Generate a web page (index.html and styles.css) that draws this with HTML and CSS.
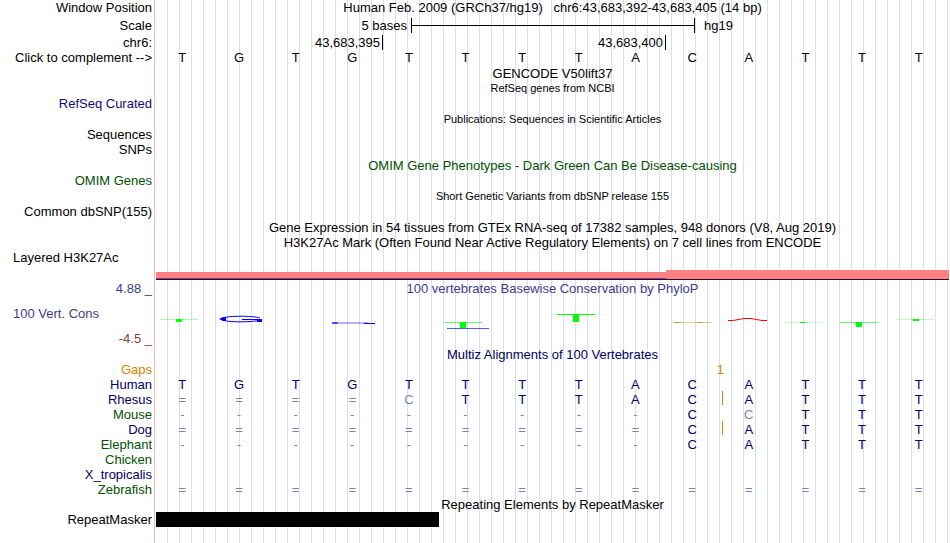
FILE: index.html
```html
<!DOCTYPE html>
<html lang="en">
<head>
  <meta charset="UTF-8" />
  <meta name="viewport" content="width=device-width, initial-scale=1" />
  <title>Human hg19 chr6:43,683,392-43,683,405</title>
  <link rel="stylesheet" href="styles.css">
</head>
<body>
  <main class="browser">
    <div class="row row-tall">
      <div class="label">Window Position</div>
      <div class="title">Human Feb. 2009 (GRCh37/hg19) &nbsp; chr6:43,683,392-43,683,405 (14 bp)</div>
    </div>
    <div class="row row-scale">
      <div class="label">Scale</div>
      <div class="scale">
        <span class="scale-size">5 bases</span>
        <span class="scale-bar"></span>
        <span class="scale-db">hg19</span>
      </div>
    </div>
    <div class="row row-tall row-ruler">
      <div class="label">chr6:</div>
      <div class="ruler">
        <span class="tick">43,683,395</span>
        <span class="tick">43,683,400</span>
      </div>
    </div>
    <div class="row">
      <button class="label complement" type="button">Click to complement --&gt;</button>
      <div class="bases">
        <span>T</span><span>G</span><span>T</span><span>G</span><span>T</span><span>T</span><span>T</span>
        <span>T</span><span>A</span><span>C</span><span>A</span><span>T</span><span>T</span><span>T</span>
      </div>
    </div>

    <!-- genes and variants -->
    <div class="row row-track"><div class="title">GENCODE V50lift37</div></div>
    <div class="row"><div class="title small">RefSeq genes from NCBI</div></div>
    <div class="row"><div class="label navy">RefSeq Curated</div></div>
    <div class="row row-track"><div class="title small">Publications: Sequences in Scientific Articles</div></div>
    <div class="row"><div class="label">Sequences</div></div>
    <div class="row"><div class="label">SNPs</div></div>
    <div class="row row-track"><div class="title green">OMIM Gene Phenotypes - Dark Green Can Be Disease-causing</div></div>
    <div class="row"><div class="label green">OMIM Genes</div></div>
    <div class="row row-track"><div class="title small">Short Genetic Variants from dbSNP release 155</div></div>
    <div class="row"><div class="label">Common dbSNP(155)</div></div>
    <div class="row row-track"><div class="title">Gene Expression in 54 tissues from GTEx RNA-seq of 17382 samples, 948 donors (V8, Aug 2019)</div></div>

    <!-- regulation -->
    <div class="row"><div class="title">H3K27Ac Mark (Often Found Near Active Regulatory Elements) on 7 cell lines from ENCODE</div></div>
    <div class="row row-h3k">
      <div class="label left">Layered H3K27Ac</div>
      <div class="signal">
        <span class="signal-low"></span>
        <span class="signal-high"></span>
      </div>
    </div>

    <!-- conservation -->
    <div class="row row-track">
      <div class="label blue">4.88 _</div>
      <div class="title blue">100 vertebrates Basewise Conservation by PhyloP</div>
    </div>
    <div class="row row-cons">
      <div class="cons-labels">
        <div class="label left blue">100 Vert. Cons</div>
        <div class="label red">-4.5 _</div>
      </div>
      <svg class="logo" viewBox="0 -1 793 51" preserveAspectRatio="none" aria-hidden="true">
        <g fill="#00ff00">
          <path d="M4 22h38v1H4z" opacity=".35"/>
          <path d="M20 22h6v3h-6z"/>
          <path d="M288 25h38v1h-38z" opacity=".65"/>
          <path d="M304 25h6v6h-6z"/>
          <path d="M401 17h38v1h-38z"/>
          <path d="M417 17h6v8h-6z"/>
          <path d="M628 25h38v1h-38z" opacity=".2"/>
          <path d="M644 25h6v1h-6z"/>
          <path d="M684 25h38v1h-38z" opacity=".6"/>
          <path d="M700 25h6v5h-6z"/>
          <path d="M741 22h38v1h-38z" opacity=".25"/>
          <path d="M757 22h6v2h-6z"/>
        </g>
        <g fill="#0000ff">
          <path d="M104 21C98 18.500 66 18.500 66 22S94 25.500 102 23.500" fill="none" stroke="#0000ff"/>
          <path d="M63 22l4-2h3v4h-3zM86 22h20v1H86zM101 22h5v3h-5z"/>
          <path d="M176 25h6v2h-6z" opacity=".7"/>
          <path d="M182 25h30v1h-30zM182 26h28v1h-28z" opacity=".3"/>
          <path d="M208 26h11v1h-11z"/>
          <path d="M291 31h42v1h-42z" opacity=".65"/>
        </g>
        <path d="M517 25h39v1h-39z" fill="#b4aa32" opacity=".5"/>
        <path d="M518 25h7v1h-7zM541 25h6v1h-6z" fill="#b4aa32"/>
        <path d="M572 23.500h5l11-2h7l11 2h5" fill="none" stroke="#ff0000"/>
      </svg>
    </div>
    <div class="row"><div class="title dark">Multiz Alignments of 100 Vertebrates</div></div>

    <table class="align">
      <tbody>
        <tr class="gaps"><th scope="row">Gaps</th><td colspan="9"></td><td colspan="2">1</td><td colspan="3"></td></tr>
        <tr><th scope="row">Human</th><td>T</td><td>G</td><td>T</td><td>G</td><td>T</td><td>T</td><td>T</td><td>T</td><td>A</td><td>C</td><td>A</td><td>T</td><td>T</td><td>T</td></tr>
        <tr><th scope="row">Rhesus</th><td class="pale">=</td><td class="pale">=</td><td class="pale">=</td><td class="pale">=</td><td class="pale">C</td><td>T</td><td>T</td><td>T</td><td>A</td><td>C</td><td class="insert">A</td><td>T</td><td>T</td><td>T</td></tr>
        <tr><th scope="row" class="green">Mouse</th><td class="pale">-</td><td class="pale">-</td><td class="pale">-</td><td class="pale">-</td><td class="pale">-</td><td class="pale">-</td><td class="pale">-</td><td class="pale">-</td><td class="pale">-</td><td>C</td><td class="pale">C</td><td>T</td><td>T</td><td>T</td></tr>
        <tr><th scope="row">Dog</th><td class="pale">=</td><td class="pale">=</td><td class="pale">=</td><td class="pale">=</td><td class="pale">=</td><td class="pale">=</td><td class="pale">=</td><td class="pale">=</td><td class="pale">=</td><td>C</td><td class="insert">A</td><td>T</td><td>T</td><td>T</td></tr>
        <tr><th scope="row" class="green">Elephant</th><td class="pale">-</td><td class="pale">-</td><td class="pale">-</td><td class="pale">-</td><td class="pale">-</td><td class="pale">-</td><td class="pale">-</td><td class="pale">-</td><td class="pale">-</td><td>C</td><td>A</td><td>T</td><td>T</td><td>T</td></tr>
        <tr><th scope="row" class="green">Chicken</th><td colspan="14"></td></tr>
        <tr><th scope="row">X_tropicalis</th><td colspan="14"></td></tr>
        <tr><th scope="row" class="green">Zebrafish</th><td class="pale">=</td><td class="pale">=</td><td class="pale">=</td><td class="pale">=</td><td class="pale">=</td><td class="pale">=</td><td class="pale">=</td><td class="pale">=</td><td class="pale">=</td><td class="pale">=</td><td class="pale">=</td><td class="pale">=</td><td class="pale">=</td><td class="pale">=</td></tr>
      </tbody>
    </table>

    <!-- repeats -->
    <div class="row"><div class="title">Repeating Elements by RepeatMasker</div></div>
    <div class="row">
      <div class="label">RepeatMasker</div>
      <div class="repeats"><span class="repeat"></span></div>
    </div>
  </main>
</body>
</html>
```

FILE: styles.css
```css
body {
  margin: 0;
  background-color: #fff;
  color: #000;
  font-family: "Liberation Sans", Arial, Helvetica, sans-serif;
  font-size: 13px;
  line-height: 15px;
}

/* pink divider and the vertical guide lines sit behind every track */
.browser {
  min-height: 100vh;
  background:
    linear-gradient(#ffb3b3, #ffb3b3) 154px 0 / 1px 100% no-repeat,
    repeating-linear-gradient(to right, transparent 0 11px, #dcdcf5 11px 12px) 156px 0 no-repeat;
}

.row {
  display: grid;
  grid-template-columns: 152px 1fr;
  column-gap: 4px;
  min-height: 15px;
  padding-right: 1px;
}

.row-tall {
  min-height: 16px;
}

.row-track {
  padding-top: 1px;
}

.label {
  grid-column: 1;
  text-align: right;
  white-space: nowrap;
}

.left {
  text-align: left;
  padding-left: 13px;
}

.title {
  grid-column: 2;
  text-align: center;
  white-space: nowrap;
}

.small {
  font-size: 11px;
}

.navy {
  color: #0c0c78;
}

.dark {
  color: #000064;
}

.green {
  color: #005000;
}

.blue {
  color: #3c3c8c;
}

.red {
  color: #8c3c3c;
}

/* position ruler */
.row-scale {
  min-height: 18px;
  align-items: center;
}

.scale {
  display: grid;
  grid-template-columns: 255fr 284fr 254fr;
  align-items: center;
}

.scale-size {
  text-align: right;
  padding-right: 4px;
}

.scale-bar {
  height: 15px;
  border: solid #000;
  border-width: 0 1px;
  background: linear-gradient(#000, #000) center / 100% 1px no-repeat;
}

.scale-db {
  padding-left: 9px;
}

.row-ruler {
  align-items: end;
}

.ruler {
  display: grid;
  grid-template-columns: 227fr 283fr 283fr;
}

.tick {
  border-right: 1px solid #000;
  padding-right: 2px;
  text-align: right;
}

.complement {
  border: none;
  padding: 0;
  background: none;
  color: inherit;
  font: inherit;
  cursor: pointer;
}

.bases {
  display: grid;
  grid-template-columns: repeat(14, 1fr);
  margin: 0 2px 0 -2px;
  text-align: center;
}

/* layered histone marks */
.row-h3k {
  min-height: 30px;
}

.signal {
  display: flex;
  align-items: flex-end;
}

.signal-low,
.signal-high {
  box-sizing: border-box;
  background-color: #ff8080;
  border-bottom: 1px solid #300030;
}

.signal-low {
  flex: 510;
  height: 8px;
  box-shadow: inset 0 -1px #804080;
}

.signal-high {
  flex: 283;
  height: 10px;
}

/* conservation */
.row-cons {
  min-height: 51px;
}

.cons-labels {
  display: flex;
  flex-direction: column;
  justify-content: space-between;
  padding: 10px 0 1px;
}

.logo {
  width: 100%;
  height: 51px;
}

.align {
  width: calc(100% - 3px);
  table-layout: fixed;
  border-collapse: collapse;
  color: #000064;
}

.align th,
.align td {
  height: 15px;
  padding: 0;
  font-weight: normal;
  text-align: center;
}

.align th {
  width: 152px;
  padding-right: 2px;
  text-align: right;
}

.align .gaps {
  color: #e08000;
}

.align .pale {
  color: #8080b2;
}

.insert {
  position: relative;
}

.insert::before {
  content: "";
  position: absolute;
  top: -1px;
  left: 2px;
  width: 1px;
  height: 14px;
  background-color: #e08000;
}

.repeats {
  display: flex;
}

.repeat {
  flex: 0 0 calc(500% / 14);
  background-color: #000;
}
```
